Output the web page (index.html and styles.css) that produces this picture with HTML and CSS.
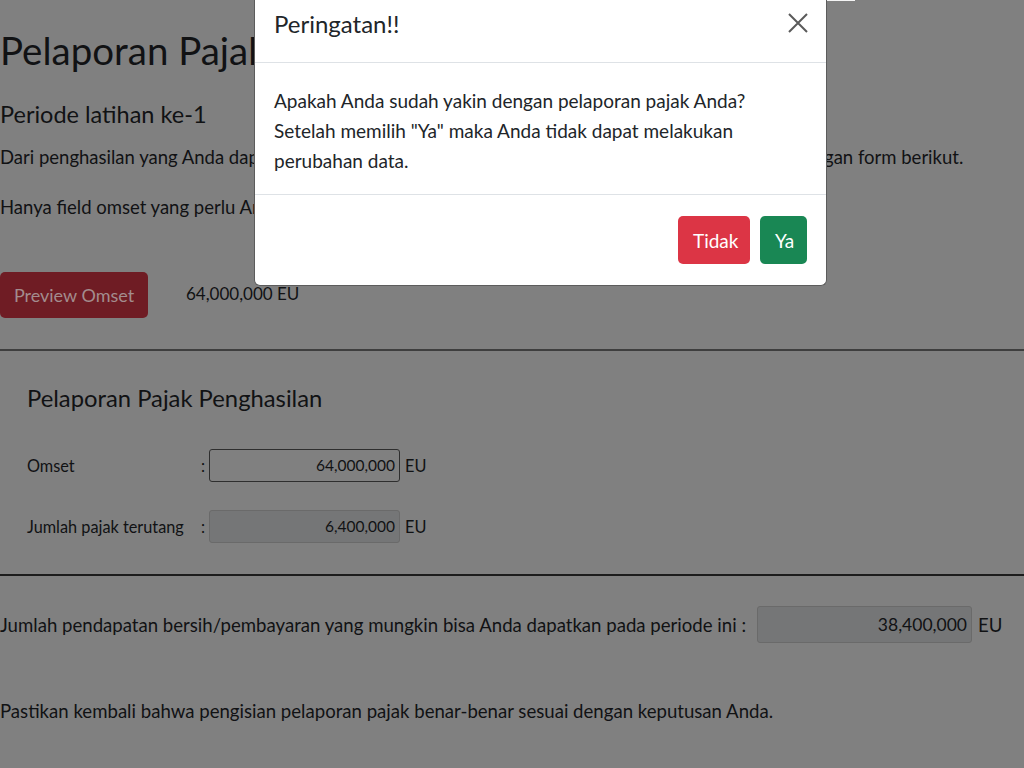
FILE: index.html
```html
<!DOCTYPE html>
<html lang="id">
<head>
<meta charset="utf-8">
<title>Pelaporan Pajak</title>
<link rel="stylesheet" href="styles.css">
</head>
<body>
<main class="page">
  <h1 class="title">Pelaporan Pajak Penghasilan</h1>
  <h3 class="period">Periode latihan ke-1</h3>
  <p class="lead">Dari penghasilan yang Anda dapatkan tersebut, silakan melaporkan pajak penghasilan Anda sesuai dengan form berikut.</p>
  <p class="note">Hanya field omset yang perlu Anda isi.</p>
  <div class="preview">
    <button class="btn btn-dim-danger">Preview Omset</button>
    <span class="preview-value">64,000,000 EU</span>
  </div>
  <hr class="rule rule-1">
  <section class="report">
    <h4 class="report-title">Pelaporan Pajak Penghasilan</h4>
    <div class="field field-1">
      <label class="field-label">Omset</label>
      <span class="colon">:</span>
      <div class="input">64,000,000</div>
      <span class="unit">EU</span>
    </div>
    <div class="field field-2">
      <label class="field-label">Jumlah pajak terutang</label>
      <span class="colon">:</span>
      <div class="input input-disabled">6,400,000</div>
      <span class="unit">EU</span>
    </div>
  </section>
  <hr class="rule rule-2">
  <div class="net">
    <span class="net-label">Jumlah pendapatan bersih/pembayaran yang mungkin bisa Anda dapatkan pada periode ini :</span>
    <div class="input input-disabled input-net">38,400,000</div>
    <span class="unit unit-net">EU</span>
  </div>
  <p class="confirm">Pastikan kembali bahwa pengisian pelaporan pajak benar-benar sesuai dengan keputusan Anda.</p>
</main>

<div class="top-edge"></div>
<div class="modal">
  <div class="modal-header">
    <h5 class="modal-title">Peringatan!!</h5>
    <button class="close" aria-label="Close">
      <svg width="20" height="20" viewBox="0 0 20 20"><path d="M1 1 L19 19 M19 1 L1 19" stroke="#5a5a5a" stroke-width="2" fill="none"/></svg>
    </button>
  </div>
  <div class="modal-body">
    <p>Apakah Anda sudah yakin dengan pelaporan pajak Anda?<br>Setelah memilih "Ya" maka Anda tidak dapat melakukan perubahan data.</p>
  </div>
  <div class="modal-footer">
    <button class="btn btn-danger">Tidak</button>
    <button class="btn btn-success">Ya</button>
  </div>
</div>
</body>
</html>
```

FILE: styles.css
```css
* { box-sizing: border-box; }
html, body { margin: 0; padding: 0; }
body {
  background: #808080;
  color: #111214;
  font-family: "Lato", "Open Sans", sans-serif;
  width: 1024px;
  height: 768px;
  overflow: hidden;
}
.page { display: flex; flex-direction: column; }
.title {
  margin: 22px 0 0;
  font-size: 38.5px;
  line-height: 56px;
  font-weight: 400;
  white-space: nowrap;
}
.period {
  margin: 20px 0 0;
  font-size: 23.5px;
  line-height: 32px;
  font-weight: 400;
}
.lead, .note {
  margin: 13px 0 0;
  font-size: 18.5px;
  line-height: 28px;
  white-space: nowrap;
}
.note { margin-top: 22px; }
.preview {
  margin-top: 51px;
  display: flex;
  align-items: center;
  gap: 38px;
}
.btn {
  font-family: inherit;
  border: 0;
  border-radius: 5px;
  cursor: pointer;
}
.btn-dim-danger {
  background: #6f1c24;
  color: #a38c8e;
  font-size: 18px;
  height: 46px;
  width: 148px;
  padding: 0;
}
.preview-value { font-size: 17px; margin-top: -4px; }
.rule {
  margin: 0;
  border: 0;
  width: 1024px;
}
.rule-1 { margin-top: 31px; border-top: 2px solid #3e3e3e; }
.rule-2 { margin-top: 31px; border-top: 2px solid #1c1c1c; }
.report {
  padding-left: 27px;
  display: flex;
  flex-direction: column;
}
.report-title {
  margin: 32px 0 0;
  font-size: 23.8px;
  line-height: 30px;
  font-weight: 400;
}
.field {
  display: flex;
  align-items: center;
  font-size: 16.3px;
}
.field-1 { margin-top: 36px; }
.field-2 { margin-top: 28px; }
.field-label { width: 174px; }
.colon { width: 8px; }
.input {
  width: 191px;
  height: 33px;
  border: 1px solid #2e2e2e;
  border-radius: 3px;
  text-align: right;
  padding: 0 4px;
  line-height: 31px;
  font-size: 15.5px;
}
.input-disabled {
  background: #757677;
  border-color: #6a6a6a;
}
.unit { margin-left: 5px; }
.net {
  margin-top: 30px;
  display: flex;
  align-items: center;
  font-size: 18.6px;
}
.net-label { white-space: nowrap; flex: 0 0 757px; }
.input-net {
  width: 215px;
  height: 37px;
  line-height: 35px;
  font-size: 17.5px;
}
.unit-net { margin-left: 6px; }
.confirm {
  margin: 54px 0 0;
  font-size: 18.6px;
  line-height: 28px;
}
.top-edge {
  position: fixed;
  top: 0;
  left: 285px;
  width: 570px;
  height: 1px;
  background: #f4f4f4;
}
.modal {
  position: fixed;
  top: 0;
  left: 254px;
  width: 573px;
  background: #fff;
  border: 1px solid #5c5c5c;
  border-top: 0;
  border-radius: 0 0 6px 6px;
  color: #212529;
}
.modal-header {
  height: 63px;
  display: flex;
  align-items: flex-start;
  justify-content: space-between;
  padding: 6px 18px 0 19px;
  border-bottom: 1px solid #dee2e6;
}
.modal-title {
  margin: 0;
  font-size: 24px;
  line-height: 36px;
  font-weight: 400;
}
.close {
  background: none;
  border: 0;
  padding: 0;
  margin-top: 7px;
  width: 20px;
  height: 20px;
  display: block;
}
.close svg { display: block; }
.modal-body { padding: 23px 19px 18px; }
.modal-body p {
  margin: 0;
  font-size: 19px;
  line-height: 30px;
}
.modal-footer {
  border-top: 1px solid #dee2e6;
  display: flex;
  justify-content: flex-end;
  gap: 10px;
  padding: 21px 19px 21px;
}
.modal-footer .btn {
  height: 48px;
  font-size: 19px;
  color: #fff;
  padding: 0 15px;
}
.btn-danger { background: #dc3545; width: 72px; }
.btn-success { background: #198754; width: 47px; }
```
